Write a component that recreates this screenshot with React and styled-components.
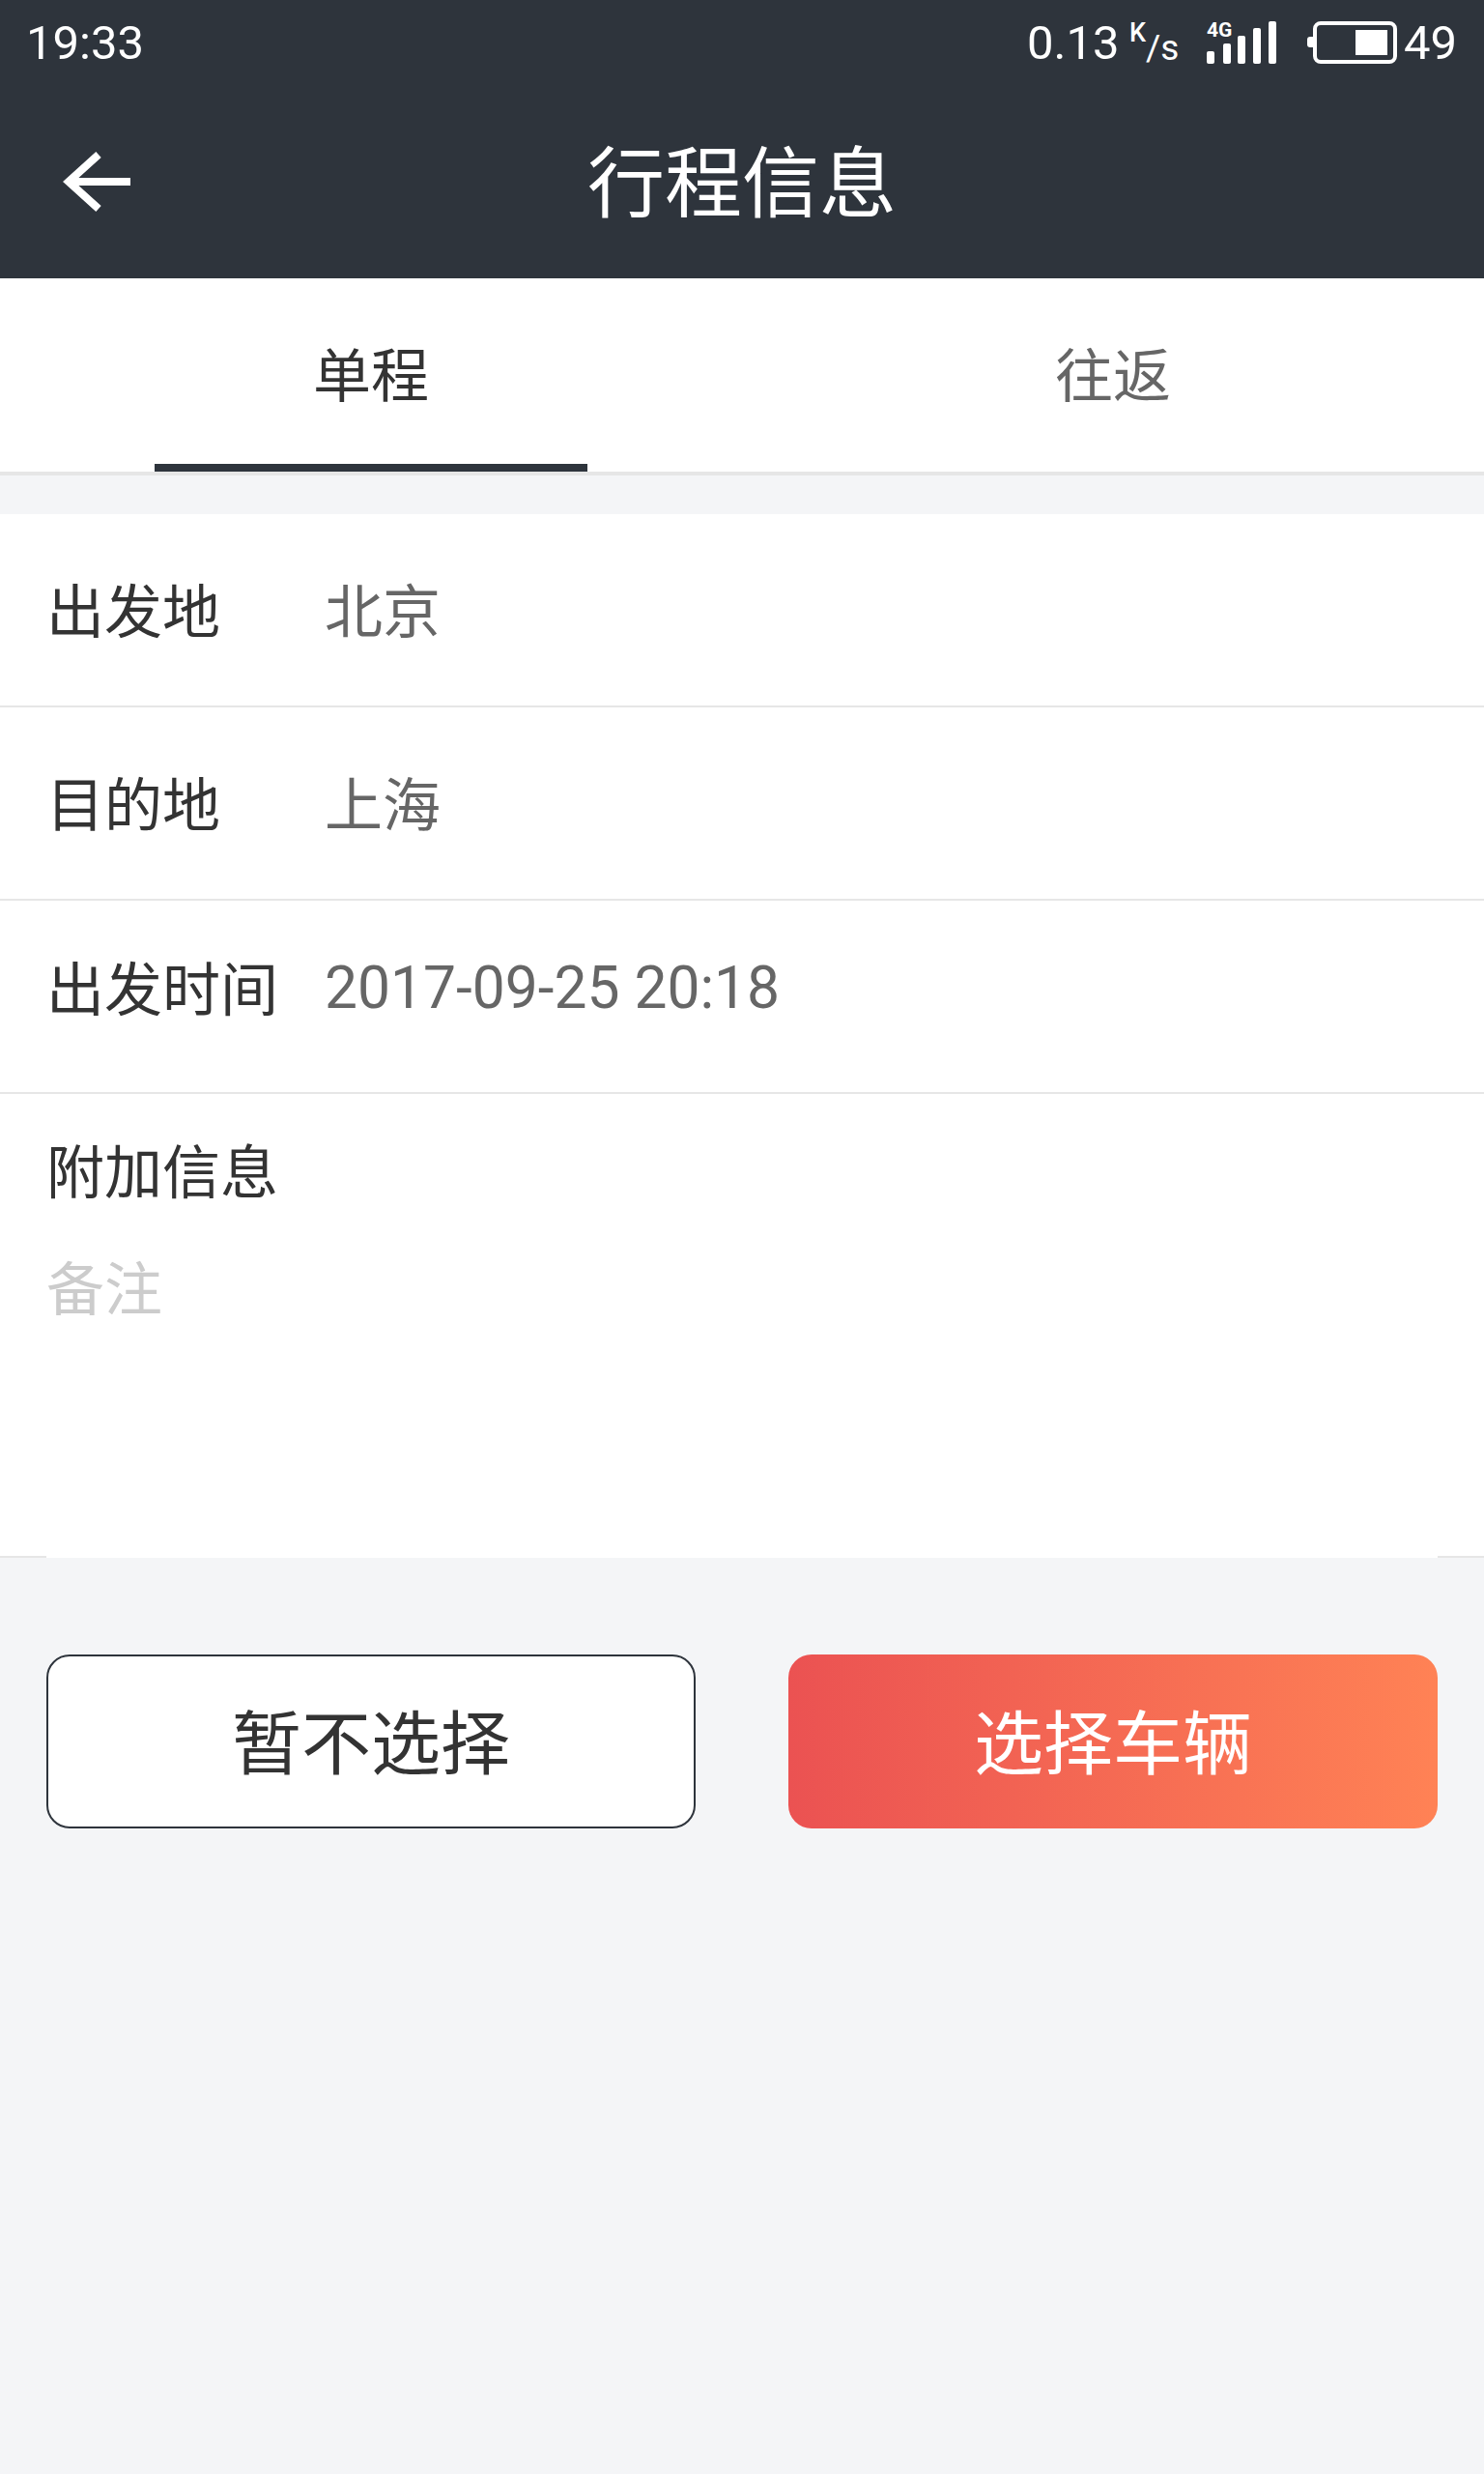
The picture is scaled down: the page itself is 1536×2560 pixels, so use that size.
import React from "react";
import styled, { createGlobalStyle } from "styled-components";

const cjk = `"Noto Sans CJK SC", "Roboto", sans-serif`;

const GlobalStyle = createGlobalStyle`
  html, body {
    margin: 0;
    padding: 0;
    background: #f4f5f7;
  }
  * {
    box-sizing: border-box;
  }
`;

const Page = styled.div`
  width: 1536px;
  height: 2560px;
  background: #f4f5f7;
  font-family: ${cjk};
`;

const Header = styled.header`
  background: #2e343c;
  color: #fff;
`;

const StatusBar = styled.div`
  height: 88px;
  padding: 0 28px 0 27px;
  display: flex;
  align-items: center;
  justify-content: space-between;
  font-family: Roboto, sans-serif;
  font-size: 49px;
  font-weight: 400;
`;

const StatusRight = styled.div`
  display: flex;
  align-items: center;
`;

const Speed = styled.span`
  width: 104px;
`;

const Unit = styled.span`
  width: 82px;
  height: 48px;
  padding-left: 2px;
  display: flex;
  font-weight: 500;
`;

const UnitK = styled.span`
  font-size: 27px;
  line-height: 28px;
  align-self: flex-start;
`;

const UnitRest = styled.span`
  font-size: 37px;
  line-height: 36px;
  font-weight: 400;
  align-self: flex-end;
`;

const Nav = styled.div`
  height: 200px;
  display: grid;
  grid-template-columns: 1fr auto 1fr;
  align-items: center;
  padding-left: 61px;
`;

const Title = styled.h1`
  margin: 0 0 10px -61px;
  font-size: 80px;
  font-weight: 400;
  line-height: 1;
`;

const Tabs = styled.div`
  height: 204px;
  display: flex;
  background: #fff;
  border-bottom: 4px solid #e6e6e6;
`;

const Tab = styled.div`
  flex: 1;
  display: flex;
  justify-content: center;
`;

const TabLabel = styled.div`
  width: 448px;
  height: 200px;
  display: flex;
  align-items: center;
  justify-content: center;
  font-size: 60px;
  color: ${props => (props.$active ? "#333" : "#666")};
  border-bottom: 8px solid ${props => (props.$active ? "#2e343c" : "transparent")};
`;

const Form = styled.section`
  margin-top: 40px;
  background: #fff;
`;

const Row = styled.div`
  height: 200px;
  display: flex;
  align-items: center;
  padding: 0 48px ${props => (props.$lift ? "24px" : "6px")};
  border-bottom: 2px solid #e6e6e6;
`;

const Label = styled.div`
  width: 288px;
  font-size: 60px;
  color: #333;
`;

const Value = styled.div`
  font-size: 60px;
  color: #666;
`;

const DateValue = styled(Value)`
  font-family: Roboto, sans-serif;
  font-size: 60.5px;
  padding-top: 7px;
`;

const Notes = styled.div`
  height: 480px;
  border-bottom: 2px solid #e6e6e6;
`;

const NotesField = styled.div`
  height: 480px;
  margin: 0 48px;
  padding-top: 33px;
  background: #fff;
  display: flex;
  flex-direction: column;
  gap: 34px;
`;

const Placeholder = styled.div`
  font-size: 60px;
  color: #ccc;
`;

const Actions = styled.div`
  display: grid;
  grid-template-columns: 1fr 1fr;
  gap: 96px;
  padding: 100px 48px;
`;

const Button = styled.button`
  height: 180px;
  border-radius: 24px;
  border: ${props => (props.$primary ? "none" : "2px solid #2e343c")};
  background: ${props => (props.$primary ? "linear-gradient(90deg, #eb5252, #ff8255)" : "#fff")};
  color: ${props => (props.$primary ? "#fff" : "#333")};
  font-family: ${cjk};
  font-size: 72px;
  padding: 0 0 8px;
`;

const SignalIcon = () => (
  <svg width="76" height="48" viewBox="0 0 76 48" style={{ marginRight: 28 }}>
    <text x="0" y="18" fontFamily="Roboto, sans-serif" fontSize="21" fontWeight="700" fill="#fff">4G</text>
    <rect x="0" y="33" width="8" height="13" rx="2" fill="#fff" />
    <rect x="17" y="25" width="8" height="21" rx="2" fill="#fff" />
    <rect x="32" y="17" width="8" height="29" rx="2" fill="#fff" />
    <rect x="48" y="9" width="8" height="37" rx="2" fill="#fff" />
    <rect x="64" y="2" width="8" height="44" rx="2" fill="#fff" />
  </svg>
);

const BatteryIcon = () => (
  <svg width="96" height="48" viewBox="0 0 96 48" style={{ marginRight: 4 }}>
    <path d="M6 18h-3a3 3 0 0 0-3 3v5a3 3 0 0 0 3 3h3z" fill="#fff" />
    <rect x="8" y="4" width="83" height="40" rx="6" fill="none" stroke="#fff" strokeWidth="4" />
    <rect x="50" y="11" width="33" height="26" fill="#fff" />
  </svg>
);

const BackIcon = () => (
  <svg width="76" height="68" viewBox="0 0 76 68" fill="none" stroke="#fff" strokeWidth="8">
    <path d="M74 34H10" />
    <path d="M41 6L10 34 41 62" strokeLinejoin="miter" />
  </svg>
);

const App = () => {
  return (
    <Page>
      <GlobalStyle />
      <Header>
        <StatusBar>
          <span>19:33</span>
          <StatusRight>
            <Speed>0.13</Speed>
            <Unit>
              <UnitK>K</UnitK>
              <UnitRest>/s</UnitRest>
            </Unit>
            <SignalIcon />
            <BatteryIcon />
            <span>49</span>
          </StatusRight>
        </StatusBar>
        <Nav>
          <BackIcon />
          <Title>行程信息</Title>
        </Nav>
      </Header>
      <Tabs>
        <Tab>
          <TabLabel $active>单程</TabLabel>
        </Tab>
        <Tab>
          <TabLabel>往返</TabLabel>
        </Tab>
      </Tabs>
      <Form>
        <Row>
          <Label>出发地</Label>
          <Value>北京</Value>
        </Row>
        <Row>
          <Label>目的地</Label>
          <Value>上海</Value>
        </Row>
        <Row $lift>
          <Label>出发时间</Label>
          <DateValue>2017-09-25 20:18</DateValue>
        </Row>
        <Notes>
          <NotesField>
            <Label>附加信息</Label>
            <Placeholder>备注</Placeholder>
          </NotesField>
        </Notes>
      </Form>
      <Actions>
        <Button>暂不选择</Button>
        <Button $primary>选择车辆</Button>
      </Actions>
    </Page>
  );
};

export default App;
